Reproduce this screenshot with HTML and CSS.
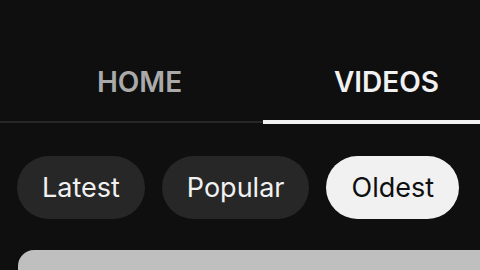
FILE: index.html
```html
<!DOCTYPE html>
<html lang="en">
<head>
    <meta charset="UTF-8">
    <meta name="viewport" content="width=device-width, initial-scale=1.0">
    <title>Channel videos</title>
    <link rel="stylesheet" href="styles.css">
</head>
<body>
    <nav class="tabs">
        <div class="tab">HOME</div>
        <div class="tab active">VIDEOS</div>
    </nav>

    <div class="chips">
        <button class="chip">Latest</button>
        <button class="chip">Popular</button>
        <button class="chip selected">Oldest</button>
    </div>

    <div class="video-card"></div>
</body>
</html>
```

FILE: styles.css
```css
body {
    margin: 0;
    width: 480px;
    height: 270px;
    overflow: hidden;
    background-color: #0f0f0f;
    color: #f1f1f1;
    font-family: Inter, "Noto Sans", sans-serif;
}
.tabs {
    display: flex;
    padding-left: 16px;
    height: 121px;
    border-bottom: 2px solid #272727;
    position: relative;
}
.tab {
    flex: 0 0 247px;
    box-sizing: border-box;
    padding-top: 42px;
    display: flex;
    align-items: center;
    justify-content: center;
    font-size: 28px;
    font-weight: 600;
    color: #aaaaaa;
    position: relative;
}
.tab.active {
    color: #f1f1f1;
}
.tab.active::after {
    content: "";
    position: absolute;
    left: 0;
    right: 0;
    bottom: -3px;
    height: 4px;
    background-color: #f1f1f1;
}
.chips {
    display: flex;
    gap: 17px;
    padding: 33px 0 0 17px;
}
.chip {
    height: 63px;
    padding: 0 25px;
    border: none;
    border-radius: 32px;
    background-color: #272727;
    color: #f1f1f1;
    font-family: inherit;
    font-size: 27px;
    font-weight: 400;
}
.chip.selected {
    background-color: #f1f1f1;
    color: #0f0f0f;
}
.video-card {
    margin: 31px -20px 0 18px;
    height: 40px;
    border-radius: 16px;
    background-color: #bfbfbf;
}
```
